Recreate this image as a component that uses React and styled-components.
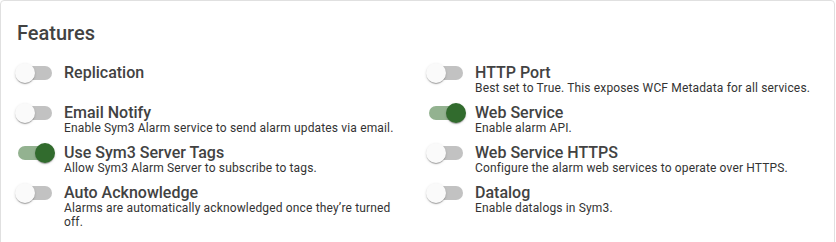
import React, { useState } from "react";
import styled, { createGlobalStyle } from "styled-components";

const Global = createGlobalStyle`
  html, body { margin: 0; padding: 0; background: #fff; }
  body { font-family: Roboto, "Noto Sans", "Liberation Sans", sans-serif; }
  * { box-sizing: border-box; }
`;

const Card = styled.section`
  width: 835px;
  border: 1px solid #e0e0e0;
  border-radius: 4px;
  background: #fff;
  padding: 16px 16px 40px;
`;

const Heading = styled.h2`
  margin: 0 0 5px;
  font-size: 20px;
  line-height: 32px;
  font-weight: 500;
  color: #424242;
`;

const Columns = styled.div`
  display: grid;
  grid-template-columns: 411px 1fr;
`;

const Column = styled.div`
  display: grid;
  grid-auto-rows: 40px;
  align-content: start;
`;

const Row = styled.label`
  display: flex;
  align-items: flex-start;
  margin-left: -11px;
  cursor: pointer;
`;

const SwitchRoot = styled.span`
  position: relative;
  flex: none;
  width: 58px;
  height: 38px;
  padding: 12px;
  display: inline-flex;
`;

const Track = styled.span`
  width: 100%;
  height: 100%;
  border-radius: 7px;
  background: ${(p) => (p.$on ? "#93b290" : "#c2c2c2")};
`;

const Thumb = styled.span`
  position: absolute;
  top: 9px;
  left: ${(p) => (p.$on ? "29px" : "9px")};
  width: 20px;
  height: 20px;
  border-radius: 50%;
  background: ${(p) => (p.$on ? "#316b2d" : "#fafafa")};
  box-shadow: 0px 2px 1px -1px rgba(0, 0, 0, 0.2),
    0px 1px 1px 0px rgba(0, 0, 0, 0.14), 0px 1px 3px 0px rgba(0, 0, 0, 0.12);
  transition: left 150ms;
`;

const HiddenInput = styled.input`
  position: absolute;
  opacity: 0;
  width: 0;
  height: 0;
  margin: 0;
`;

const Text = styled.span`
  display: flex;
  flex-direction: column;
  padding-top: 11px;
  max-width: 345px;
`;

const Title = styled.span`
  font-size: 16px;
  line-height: 16px;
  font-weight: 500;
  color: #424242;
`;

const Desc = styled.span`
  font-size: 12px;
  line-height: 14.4px;
  font-weight: 400;
  letter-spacing: 0.15px;
  color: #333;
`;

function Switch({ on, onChange }) {
  return (
    <SwitchRoot>
      <HiddenInput type="checkbox" role="switch" checked={on} onChange={onChange} />
      <Track $on={on} />
      <Thumb $on={on} />
    </SwitchRoot>
  );
}

function Feature({ item, on, onToggle }) {
  return (
    <Row>
      <Switch on={on} onChange={onToggle} />
      <Text>
        <Title>{item.title}</Title>
        {item.desc && <Desc>{item.desc}</Desc>}
      </Text>
    </Row>
  );
}

const left = [
  { id: "replication", title: "Replication", on: false },
  {
    id: "email",
    title: "Email Notify",
    desc: "Enable Sym3 Alarm service to send alarm updates via email.",
    on: false,
  },
  {
    id: "tags",
    title: "Use Sym3 Server Tags",
    desc: "Allow Sym3 Alarm Server to subscribe to tags.",
    on: true,
  },
  {
    id: "ack",
    title: "Auto Acknowledge",
    desc: "Alarms are automatically acknowledged once they\u2019re turned off.",
    on: false,
  },
];

const right = [
  {
    id: "http",
    title: "HTTP Port",
    desc: "Best set to True. This exposes WCF Metadata for all services.",
    on: false,
  },
  { id: "web", title: "Web Service", desc: "Enable alarm API.", on: true },
  {
    id: "https",
    title: "Web Service HTTPS",
    desc: "Configure the alarm web services to operate over HTTPS.",
    on: false,
  },
  { id: "datalog", title: "Datalog", desc: "Enable datalogs in Sym3.", on: false },
];

export default function App() {
  const [state, setState] = useState(() =>
    Object.fromEntries([...left, ...right].map((i) => [i.id, i.on]))
  );
  const toggle = (id) => setState((s) => ({ ...s, [id]: !s[id] }));
  const render = (items) =>
    items.map((item) => (
      <Feature key={item.id} item={item} on={state[item.id]} onToggle={() => toggle(item.id)} />
    ));
  return (
    <>
      <Global />
      <Card>
        <Heading>Features</Heading>
        <Columns>
          <Column>{render(left)}</Column>
          <Column>{render(right)}</Column>
        </Columns>
      </Card>
    </>
  );
}
